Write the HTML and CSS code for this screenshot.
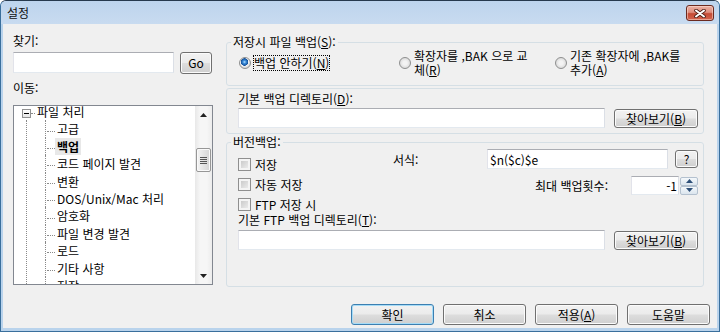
FILE: index.html
```html
<!DOCTYPE html>
<html lang="ko">
<head>
  <meta charset="UTF-8">
  <title>설정</title>
  <link rel="stylesheet" href="styles.css">
</head>
<body>
  <div class="window">
    <div class="titlebar">
      <span class="title">설정</span>
      <button class="close-btn" aria-label="닫기">
        <svg width="12" height="9" viewBox="0 0 12 9">
          <path d="M2 1.5 L10 7.5 M10 1.5 L2 7.5" stroke="#4a1c14" stroke-width="3.6" stroke-linecap="round"/>
          <path d="M2 1.5 L10 7.5 M10 1.5 L2 7.5" stroke="#fff" stroke-width="2" stroke-linecap="round"/>
        </svg>
      </button>
    </div>

    <div class="client">
      <div class="main">

        <div class="nav">
          <label class="caption" for="search">찾기:</label>
          <div class="search-row">
            <input type="text" id="search" class="textbox search">
            <button class="btn go">Go</button>
          </div>
          <label class="caption nav-caption">이동:</label>
          <div class="tree">
            <div class="tree-view">
              <ul class="tree-root">
                <li><span class="toggle"></span><span class="branch"></span><span class="node-text">파일 처리</span>
                  <ul class="tree-children">
                    <li><span class="node-text">고급</span></li>
                    <li class="selected"><span class="node-text">백업</span></li>
                    <li><span class="node-text">코드 페이지 발견</span></li>
                    <li><span class="node-text">변환</span></li>
                    <li><span class="node-text">DOS/Unix/Mac 처리</span></li>
                    <li><span class="node-text">암호화</span></li>
                    <li><span class="node-text">파일 변경 발견</span></li>
                    <li><span class="node-text">로드</span></li>
                    <li><span class="node-text">기타 사항</span></li>
                    <li><span class="node-text">저장</span></li>
                  </ul>
                </li>
              </ul>
            </div>
            <div class="vscroll">
              <div class="sb-btn">
                <svg width="7" height="4" viewBox="0 0 7 4"><polygon points="0,4 3.5,0 7,4" fill="#222"/></svg>
              </div>
              <div class="sb-track">
                <div class="sb-thumb"><span class="grip"></span></div>
              </div>
              <div class="sb-btn">
                <svg width="7" height="4" viewBox="0 0 7 4"><polygon points="0,0 7,0 3.5,4" fill="#222"/></svg>
              </div>
            </div>
          </div>
        </div>

        <div class="settings">
          <fieldset class="group">
            <legend>저장시 파일 백업(<u>S</u>):</legend>
            <div class="radio-row">
              <label class="radio-item first"><input type="radio" name="mode" checked><span class="focus">백업 안하기(<u>N</u>)</span></label>
              <label class="radio-item second"><input type="radio" name="mode"><span>확장자를 ,BAK 으로 교<br>체(<u>R</u>)</span></label>
              <label class="radio-item"><input type="radio" name="mode"><span>기존 확장자에 ,BAK를<br>추가(<u>A</u>)</span></label>
            </div>
          </fieldset>

          <div class="group dir-box">
            <div class="caption">기본 백업 디렉토리(<u>D</u>):</div>
            <div class="field-row">
              <input type="text" class="textbox">
              <button class="btn browse">찾아보기(<u>B</u>)</button>
            </div>
          </div>

          <fieldset class="group version-group">
            <legend>버전백업:</legend>
            <div class="group-body">
              <div class="version-row">
                <div class="checks">
                  <label class="check"><input type="checkbox">저장</label>
                  <label class="check"><input type="checkbox">자동 저장</label>
                  <label class="check"><input type="checkbox">FTP 저장 시</label>
                </div>
                <div class="format">
                  <div class="format-row">
                    <span class="format-label">서식:</span>
                    <input type="text" class="textbox format-input" value="$n($c)$e">
                    <button class="btn help">?</button>
                  </div>
                  <div class="count-row">
                    <span class="count-label">최대 백업횟수:</span>
                    <input type="text" class="textbox spin-input" value="-1">
                    <div class="spin-btns">
                      <button class="spin-btn">
                        <svg width="7" height="4" viewBox="0 0 7 4"><polygon points="0,4 3.5,0 7,4" fill="#2d4f78"/></svg>
                      </button>
                      <button class="spin-btn">
                        <svg width="7" height="4" viewBox="0 0 7 4"><polygon points="0,0 7,0 3.5,4" fill="#2d4f78"/></svg>
                      </button>
                    </div>
                  </div>
                </div>
              </div>
              <div class="caption">기본 FTP 백업 디렉토리(<u>T</u>):</div>
              <div class="field-row ftp-row">
                <input type="text" class="textbox">
                <button class="btn browse">찾아보기(<u>B</u>)</button>
              </div>
            </div>
          </fieldset>
        </div>

      </div>

      <div class="footer">
        <button class="btn wide default">확인</button>
        <button class="btn wide">취소</button>
        <button class="btn wide">적용(<u>A</u>)</button>
        <button class="btn wide">도움말</button>
      </div>
    </div>
  </div>
</body>
</html>
```

FILE: styles.css
```css
* {
  box-sizing: border-box;
}
body {
  margin: 0;
  font-family: "Noto Sans CJK KR", "Noto Sans", sans-serif;
  font-size: 12px;
  color: #000;
  background: #fff;
}
u {
  text-underline-offset: 1px;
}

/* window frame */
.window {
  width: 720px;
  height: 332px;
  display: flex;
  flex-direction: column;
  border: 1px solid #3a6f9c;
  border-top-color: #26394d;
  border-radius: 6px 6px 0 0;
  background: #b9d3ec;
  overflow: hidden;
}
.titlebar {
  height: 23px;
  flex: none;
  display: flex;
  justify-content: space-between;
  align-items: flex-start;
  padding: 3px 5px 0 6px;
  background: linear-gradient(#bdd4ed, #c8dbf0);
}
.title {
  line-height: 18px;
  color: #111;
}
.close-btn {
  width: 28px;
  height: 16px;
  margin-top: 1px;
  padding: 0;
  display: flex;
  align-items: center;
  justify-content: center;
  border: 1px solid #6b2a20;
  border-radius: 3px;
  background: linear-gradient(#eab1a5 0%, #df8e7e 45%, #c44a34 55%, #d4654f 100%);
  box-shadow: inset 0 0 0 1px rgba(255, 230, 220, 0.5);
}
.client {
  flex: 1;
  margin: 0 2px 3px 2px;
  padding: 10px 0 3px 10px;
  display: flex;
  flex-direction: column;
  background: #f0f0f0;
}
.main {
  display: flex;
  align-items: flex-start;
}

/* common controls */
.caption {
  display: block;
  line-height: 14px;
}
.textbox {
  display: block;
  margin: 0;
  padding: 0 2px;
  border: 1px solid;
  border-color: #abadb3 #dbdfe6 #e3e9ef #e2e3ea;
  background: #fff;
  font: inherit;
  color: #000;
}
.btn {
  margin: 0;
  padding: 0;
  border: 1px solid #707070;
  border-radius: 3px;
  background: linear-gradient(#f2f2f2 0%, #ebebeb 48%, #dddddd 52%, #cfcfcf 100%);
  box-shadow: inset 0 0 0 1px #fbfbfb;
  font: inherit;
  color: #000;
  line-height: 14px;
}
.btn.default {
  border-color: #3c7fb1;
  box-shadow: inset 0 0 0 1px #a6dcf7;
}

/* left: search + tree */
.nav {
  width: 200px;
  flex: none;
  display: flex;
  flex-direction: column;
}
.search-row {
  display: flex;
  align-items: flex-start;
  margin-top: 4px;
}
.search {
  width: 161px;
  height: 21px;
}
.go {
  width: 32px;
  height: 22px;
  margin-left: 6px;
}
.nav-caption {
  margin-top: 7px;
}
.tree {
  margin-top: 10px;
  height: 180px;
  display: flex;
  border: 1px solid #828790;
  background: #fff;
}
.tree-view {
  flex: 1;
  overflow: hidden;
}
.tree-root,
.tree-children {
  list-style: none;
  margin: 0;
  padding: 0;
  white-space: nowrap;
}
.tree-root {
  margin-top: -3px;
  line-height: 17.4px;
}
.tree-root > li {
  padding-left: 8px;
}
.toggle {
  display: inline-block;
  position: relative;
  width: 9px;
  height: 9px;
  vertical-align: middle;
  border: 1px solid #919191;
  background: linear-gradient(#fff, #e6e6e6);
}
.toggle::after {
  content: "";
  position: absolute;
  left: 1px;
  top: 3px;
  width: 5px;
  height: 1px;
  background: #000;
}
.branch {
  display: inline-block;
  width: 4px;
  vertical-align: middle;
  border-top: 1px dotted #8a8a8a;
}
.node-text {
  padding: 0 2px;
}
.tree-children {
  margin-left: 4px;
  padding-left: 18px;
  border-left: 1px dotted #8a8a8a;
}
.tree-children li {
  padding-left: 1px;
  border-left: 1px dotted #8a8a8a;
}
.tree-children li::before {
  content: "";
  display: inline-block;
  width: 8px;
  vertical-align: middle;
  border-top: 1px dotted #8a8a8a;
}
.tree-children li.selected .node-text {
  font-weight: bold;
  background: #e8e8e8;
}
.vscroll {
  width: 17px;
  flex: none;
  display: flex;
  flex-direction: column;
  background: linear-gradient(to right, #e8e8e8, #f6f6f6 30%, #f6f6f6 70%, #ececec);
}
.sb-btn {
  height: 17px;
  display: flex;
  align-items: center;
  justify-content: center;
}
.sb-track {
  flex: 1;
}
.sb-thumb {
  height: 24px;
  margin: 25px 1px 0 1px;
  display: flex;
  align-items: center;
  justify-content: center;
  border: 1px solid #979797;
  border-radius: 2px;
  background: linear-gradient(to right, #f5f5f5, #e4e4e4 50%, #d5d5d5);
  box-shadow: inset 0 0 0 1px #fafafa;
}
.grip {
  width: 7px;
  height: 7px;
  background: repeating-linear-gradient(#555 0 1px, transparent 1px 2px);
}

/* right: settings groups */
.settings {
  width: 478px;
  flex: none;
  margin-left: 13px;
  padding-top: 1px;
}
.group {
  margin: 0;
  padding: 0;
  min-width: 0;
  border: 1px solid #d5dfe5;
  border-radius: 3px;
}
legend {
  margin-left: 4px;
  padding: 0 2px;
  line-height: 14px;
}
.radio-row {
  display: flex;
  align-items: center;
  padding: 0 0 8px 12px;
  line-height: 14px;
  white-space: nowrap;
}
.radio-item {
  display: flex;
  align-items: center;
}
.radio-item.first {
  width: 160px;
}
.radio-item.second {
  width: 156px;
}
input[type="radio"] {
  appearance: none;
  width: 12px;
  height: 12px;
  margin: 0 3px 0 0;
  flex: none;
  border: 1px solid #8e8f8f;
  border-radius: 50%;
  background: radial-gradient(circle at 50% 50%, #f3f3f3 0, #f3f3f3 2px, #dcdcdc 5px);
}
input[type="radio"]:checked {
  background: radial-gradient(circle at 45% 40%, #bfe4ff 0, #3d8fdc 1.5px, #14509a 3.5px, #f3f3f3 4px, #dcdcdc 5.5px);
}
.focus {
  outline: 1px dotted #000;
  outline-offset: 0;
}
.dir-box {
  margin-top: 2px;
  padding: 3px 5px 5px 11px;
}
.field-row {
  display: flex;
  align-items: flex-end;
  margin-top: 2px;
}
.field-row .textbox {
  flex: 1;
  height: 20px;
}
.browse {
  width: 84px;
  height: 19px;
  margin-left: 9px;
}
.version-group {
  margin-top: 1px;
}
.group-body {
  padding: 0 5px 36px 11px;
}
.version-row {
  display: flex;
  align-items: flex-start;
}
.checks {
  width: 155px;
  flex: none;
  margin-top: 6px;
  display: flex;
  flex-direction: column;
  gap: 2px;
}
.check {
  display: flex;
  align-items: center;
  height: 18px;
}
input[type="checkbox"] {
  appearance: none;
  width: 13px;
  height: 13px;
  margin: 0 4px 0 0;
  border: 1px solid #8f8f8f;
  background: linear-gradient(135deg, #c2c2c2, #f3f3f3);
  box-shadow: inset 0 0 0 2px #f4f4f4;
}
.format {
  flex: 1;
}
.format-row {
  display: flex;
  align-items: center;
  height: 20px;
}
.format-label {
  width: 94px;
  flex: none;
}
.format-input {
  flex: 1;
  min-width: 0;
  height: 20px;
}
.help {
  width: 23px;
  height: 18px;
  margin-left: 7px;
}
.count-row {
  display: flex;
  justify-content: flex-end;
  align-items: center;
  margin-top: 7px;
}
.count-label {
  margin-right: 23px;
}
.spin-input {
  width: 48px;
  height: 19px;
  padding-right: 1px;
  text-align: right;
}
.spin-btns {
  width: 18px;
  margin-left: 1px;
  display: flex;
  flex-direction: column;
}
.spin-btn {
  height: 9px;
  padding: 0;
  display: flex;
  align-items: center;
  justify-content: center;
  border: 1px solid #b4c1cf;
  border-radius: 2px;
  background: linear-gradient(#f4f8fb, #dbe5ee);
}
.ftp-row {
  margin-top: 3px;
}

/* dialog buttons */
.footer {
  margin-top: auto;
  display: flex;
  justify-content: flex-end;
  gap: 9px;
  padding-right: 7px;
}
.wide {
  width: 83px;
  height: 21px;
}
```
